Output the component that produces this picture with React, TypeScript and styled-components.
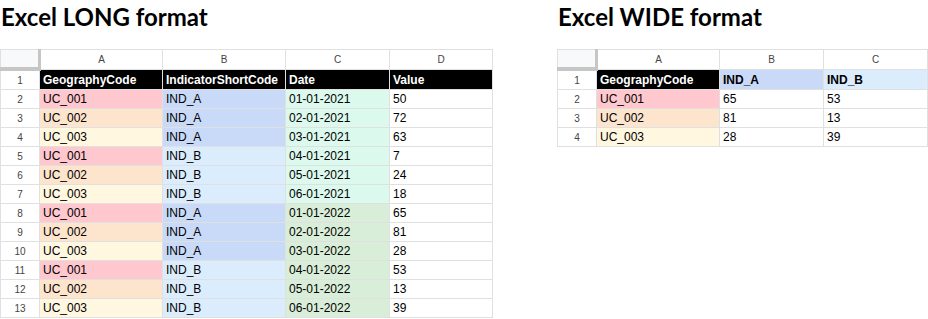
import React from "react";
import styled, { createGlobalStyle } from "styled-components";

const Global = createGlobalStyle`
  html, body { margin: 0; padding: 0; background: #ffffff; }
  body { font-family: "Liberation Sans", Arial, sans-serif; }
`;

const Page = styled.div`
  display: flex;
  gap: 64px;
  width: 928px;
  height: 319px;
  overflow: hidden;
`;

const Block = styled.section`
  display: flex;
  flex-direction: column;
`;

const Title = styled.h2`
  margin: 0;
  padding: 3px 0 0 1px;
  height: 49px;
  box-sizing: border-box;
  font-family: Lato, "Noto Sans", sans-serif;
  font-weight: 700;
  font-size: 24px;
  line-height: 28px;
  color: #000;
`;

const Table = styled.table`
  border-collapse: collapse;
  table-layout: fixed;
  border: 1px solid #e0e0e0;
  font-family: "Liberation Sans", Arial, sans-serif;
`;

const Corner = styled.th`
  width: 37px;
  height: 17px;
  padding: 0;
  background: #f8f9fa;
  border-right: 3px solid #c6c6c6;
  border-bottom: 4px solid #c6c6c6;
`;

const ColHead = styled.th<{ $w: number }>`
  width: ${(p) => p.$w - 1}px;
  height: 17px;
  padding: 0;
  border: 1px solid #e0e0e0;
  font-size: 10px;
  font-weight: 400;
  color: #444;
  text-align: center;
  background: #fff;
`;

const RowHead = styled.td`
  height: 18px;
  padding: 0;
  border: 1px solid #e0e0e0;
  font-size: 10px;
  color: #444;
  text-align: center;
  background: #fff;
`;

const Cell = styled.td<{ $bg?: string; $head?: boolean; $dark?: boolean }>`
  height: 18px;
  padding: 0 3px;
  border: 1px solid #e0e0e0;
  background: ${(p) => p.$bg || "#ffffff"};
  color: ${(p) => (p.$dark ? "#ffffff" : "#000000")};
  font-size: 12px;
  font-weight: ${(p) => (p.$head ? 700 : 400)};
  line-height: 18px;
  white-space: nowrap;
  overflow: hidden;
  vertical-align: bottom;
`;

const C = {
  black: "#000000",
  uc1: "#ffc7ce",
  uc2: "#fde4cd",
  uc3: "#fff7df",
  indA: "#c9daf8",
  indB: "#dbedfd",
  d21: "#dcf9ee",
  d22: "#d9eed8",
};

const geoBg = (g: string) => (g === "UC_001" ? C.uc1 : g === "UC_002" ? C.uc2 : C.uc3);

const longRows: [string, string, string, number][] = [
  ["UC_001", "IND_A", "01-01-2021", 50],
  ["UC_002", "IND_A", "02-01-2021", 72],
  ["UC_003", "IND_A", "03-01-2021", 63],
  ["UC_001", "IND_B", "04-01-2021", 7],
  ["UC_002", "IND_B", "05-01-2021", 24],
  ["UC_003", "IND_B", "06-01-2021", 18],
  ["UC_001", "IND_A", "01-01-2022", 65],
  ["UC_002", "IND_A", "02-01-2022", 81],
  ["UC_003", "IND_A", "03-01-2022", 28],
  ["UC_001", "IND_B", "04-01-2022", 53],
  ["UC_002", "IND_B", "05-01-2022", 13],
  ["UC_003", "IND_B", "06-01-2022", 39],
];

const wideRows: [string, number, number][] = [
  ["UC_001", 65, 53],
  ["UC_002", 81, 13],
  ["UC_003", 28, 39],
];

function LongSheet() {
  return (
    <Table>
      <thead>
        <tr>
          <Corner />
          <ColHead $w={122}>A</ColHead>
          <ColHead $w={123}>B</ColHead>
          <ColHead $w={104}>C</ColHead>
          <ColHead $w={103}>D</ColHead>
        </tr>
      </thead>
      <tbody>
        <tr>
          <RowHead>1</RowHead>
          <Cell $bg={C.black} $head $dark>GeographyCode</Cell>
          <Cell $bg={C.black} $head $dark>IndicatorShortCode</Cell>
          <Cell $bg={C.black} $head $dark>Date</Cell>
          <Cell $bg={C.black} $head $dark>Value</Cell>
        </tr>
        {longRows.map(([g, ind, d, v], i) => (
          <tr key={i}>
            <RowHead>{i + 2}</RowHead>
            <Cell $bg={geoBg(g)}>{g}</Cell>
            <Cell $bg={ind === "IND_A" ? C.indA : C.indB}>{ind}</Cell>
            <Cell $bg={d.endsWith("2021") ? C.d21 : C.d22}>{d}</Cell>
            <Cell>{v}</Cell>
          </tr>
        ))}
      </tbody>
    </Table>
  );
}

function WideSheet() {
  return (
    <Table>
      <thead>
        <tr>
          <Corner />
          <ColHead $w={122}>A</ColHead>
          <ColHead $w={104}>B</ColHead>
          <ColHead $w={104}>C</ColHead>
        </tr>
      </thead>
      <tbody>
        <tr>
          <RowHead>1</RowHead>
          <Cell $bg={C.black} $head $dark>GeographyCode</Cell>
          <Cell $bg={C.indA} $head>IND_A</Cell>
          <Cell $bg={C.indB} $head>IND_B</Cell>
        </tr>
        {wideRows.map(([g, a, b], i) => (
          <tr key={i}>
            <RowHead>{i + 2}</RowHead>
            <Cell $bg={geoBg(g)}>{g}</Cell>
            <Cell>{a}</Cell>
            <Cell>{b}</Cell>
          </tr>
        ))}
      </tbody>
    </Table>
  );
}

export default function App() {
  return (
    <>
      <Global />
      <Page>
        <Block>
          <Title>Excel LONG format</Title>
          <LongSheet />
        </Block>
        <Block>
          <Title>Excel WIDE format</Title>
          <WideSheet />
        </Block>
      </Page>
    </>
  );
}
